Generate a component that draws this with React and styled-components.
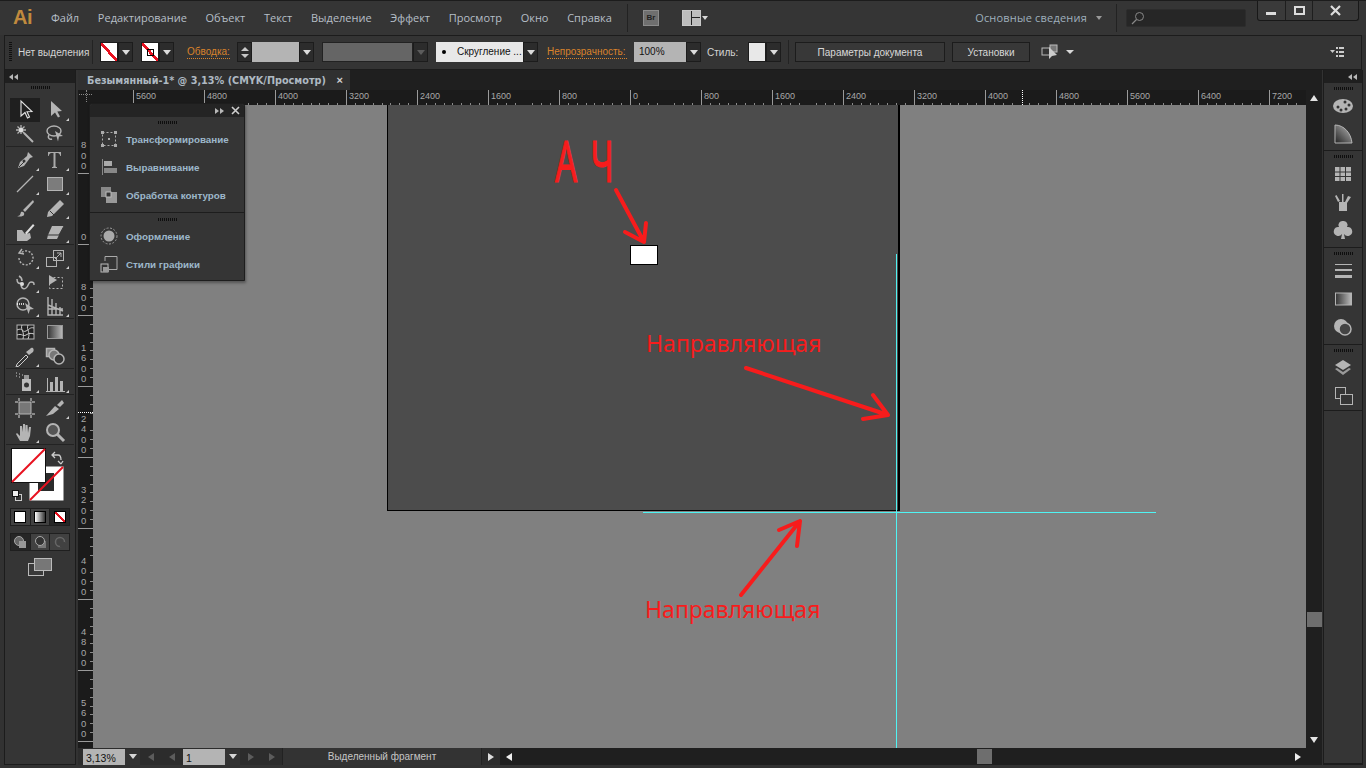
import React from 'react';
import styled, { createGlobalStyle } from 'styled-components';

const Global = createGlobalStyle`
  html, body { margin: 0; padding: 0; background: #333; }
  * { box-sizing: border-box; }
`;

const UI = '"Open Sans", "Liberation Sans", sans-serif';
const TAHOMA = '"DejaVu Sans", "Liberation Sans", sans-serif';
const ARIAL = '"Liberation Sans", Arial, sans-serif';

const Window = styled.div`
  width: 1366px;
  height: 768px;
  display: flex;
  flex-direction: column;
  background: #323232;
  overflow: hidden;
  border-top: 1px solid #1c1c1c;
`;

/* верхнее меню */
const MenuBar = styled.div`
  height: 34px;
  flex: none;
  display: flex;
  align-items: center;
  padding: 0 0 1px 13px;
  background: #353535;
  position: relative;
`;
const Logo = styled.div`
  width: 38px;
  font: bold 20px ${ARIAL};
  color: #c08a3e;
  letter-spacing: -0.5px;
`;
const Menu = styled.div`
  display: flex;
  gap: 18.7px;
  font: 11px ${UI};
  color: #b6bfc7;
`;
const MenuSep = styled.div`
  width: 1px;
  height: 28px;
  background: #222;
  margin: ${p => p.$m || '0'};
`;
const BridgeBtn = styled.div`
  width: 16px;
  height: 16px;
  background: #6f6f6f;
  border: 1px solid #8b8b8b;
  font: bold 8px ${ARIAL};
  color: #222;
  display: flex;
  align-items: center;
  justify-content: center;
  margin: 0 23px 0 15px;
`;
const ArrangeBtn = styled.div`
  width: 19px;
  height: 16px;
  border: 1px solid #c8c8c8;
  display: grid;
  grid-template-columns: 1fr 1fr;
  grid-template-rows: 1fr 1fr;
  gap: 1px;
  background: #222;
  & > i { background: #bdbdbd; }
  & > i:first-child { grid-row: span 2; }
`;
const TinyDown = styled.div`
  width: 0;
  height: 0;
  border-left: ${p => p.$s || 3}px solid transparent;
  border-right: ${p => p.$s || 3}px solid transparent;
  border-top: ${p => p.$s || 4}px solid ${p => p.$c || '#d8d8d8'};
  margin: ${p => p.$m || '0'};
`;
const Workspace = styled.div`
  font: 11px ${UI};
  letter-spacing: 0.2px;
  color: #9fb0bd;
  margin-left: auto;
`;
const SearchBox = styled.div`
  width: 120px;
  height: 18px;
  background: #262626;
  border: 1px solid #2c2c2c;
  border-radius: 2px;
  margin: 0 120px 0 9px;
  padding-left: 4px;
  display: flex;
  align-items: center;
`;
const WinButtons = styled.div`
  position: absolute;
  top: 0;
  right: 7px;
  width: 102px;
  height: 20px;
  display: flex;
  border: 1px solid #181818;
  border-top: none;
  border-radius: 0 0 3px 3px;
  background: #3a3a3a;
`;
const WinBtn = styled.div`
  flex: ${p => p.$w ? 'none' : 1};
  width: ${p => p.$w || 0}px;
  display: flex;
  align-items: center;
  justify-content: center;
  border-right: ${p => p.$last ? 'none' : '1px solid #1e1e1e'};
`;

/* панель управления */
const ControlBar = styled.div`
  height: 35px;
  flex: none;
  margin: 0 4px;
  display: flex;
  align-items: center;
  background: #343434;
  border: 1px solid #1c1c1c;
  padding: 0 0 1px 4px;
  font: 10px ${ARIAL};
  color: #d4d4d4;
  white-space: nowrap;
`;
const Grip = styled.div`
  width: 3px;
  height: 20px;
  flex: none;
  background: repeating-linear-gradient(180deg, #111 0 1px, transparent 1px 2px);
  margin-right: 6px;
`;
const CtlSep = styled.div`
  width: 1px;
  height: 24px;
  flex: none;
  background: #232323;
  margin: ${p => p.$m || '0 7px 0 3px'};
`;
const NoSel = styled.span`
  width: 71px;
  flex: none;
`;
const Combo = styled.div`
  display: flex;
  height: 20px;
  flex: none;
  margin-left: ${p => p.$ml || 0}px;
`;
const DropBtn = styled.div`
  width: 15px;
  height: 20px;
  background: #2c2c2c;
  border: 1px solid #1c1c1c;
  display: flex;
  align-items: center;
  justify-content: center;
  &::before {
    content: '';
    border-left: 4px solid transparent;
    border-right: 4px solid transparent;
    border-top: 5px solid ${p => p.$off ? '#5c5c5c' : '#dcdcdc'};
  }
`;
const Swatch = styled.div`
  width: 18px;
  height: 20px;
  border: 1px solid #1c1c1c;
  background: ${p => p.$plain ? '#e8e8e8' : 'linear-gradient(to top right, #fff 0 44%, #e8111f 44% 56%, #fff 56%)'};
  position: relative;
`;
const StrokeMark = styled.span`
  position: absolute;
  left: 5px;
  top: 6px;
  width: 7px;
  height: 7px;
  border: 1px solid #000;
`;
const OrangeLabel = styled.span`
  width: ${p => p.$w}px;
  color: #d9822b;
  border-bottom: 1px dotted #d9822b;
  line-height: 12px;
  margin-left: ${p => p.$ml || 0}px;
  flex: none;
`;
const Spinner = styled.div`
  width: 15px;
  height: 20px;
  background: #2c2c2c;
  border: 1px solid #1c1c1c;
  display: flex;
  flex-direction: column;
  align-items: center;
  justify-content: center;
  gap: 3px;
`;
const UpTri = styled.div`
  border-left: 4px solid transparent;
  border-right: 4px solid transparent;
  border-bottom: ${p => p.$big ? 6 : 4}px solid ${p => p.$big ? '#e4e4e4' : '#c8c8c8'};
`;
const DownTri = styled.div`
  border-left: 4px solid transparent;
  border-right: 4px solid transparent;
  border-top: ${p => p.$big ? 6 : 4}px solid ${p => p.$big ? '#e4e4e4' : '#c8c8c8'};
`;
const Field = styled.div`
  width: ${p => p.$w}px;
  height: 20px;
  background: ${p => p.$bg || '#b4b4b4'};
  color: #111;
  border: 1px solid ${p => p.$line || 'transparent'};
  padding-left: 4px;
  font: 10px/18px ${ARIAL};
  overflow: hidden;
  white-space: nowrap;
  display: flex;
  align-items: center;
`;
const CornerDot = styled.i`
  width: 4px;
  height: 4px;
  flex: none;
  border-radius: 50%;
  background: #000;
  margin: 0 11px 0 1px;
`;
const CtlText = styled.span`
  width: ${p => p.$w}px;
  margin-left: ${p => p.$ml || 0}px;
  flex: none;
`;
const CtlButton = styled.div`
  width: ${p => p.$w}px;
  height: 20px;
  flex: none;
  margin-left: ${p => p.$ml || 0}px;
  background: #383838;
  border: 1px solid #1c1c1c;
  display: flex;
  align-items: center;
  justify-content: center;
  color: #d8d8d8;
`;
const LinkIcon = styled.svg`
  display: block;
  flex: none;
  margin-left: 11px;
`;
const PanelMenuIcon = styled.svg`
  display: block;
  flex: none;
  margin: 0 16px 0 auto;
`;

/* рабочая область */
const Body = styled.div`
  flex: 1;
  min-height: 0;
  display: flex;
  padding: 0 3px 3px 4px;
`;
const ToolPanel = styled.div`
  width: 72px;
  flex: none;
  background: #353535;
  border: 1px solid #1c1c1c;
  border-top: none;
  display: flex;
  flex-direction: column;
`;
const PanelHead = styled.div`
  height: 13px;
  flex: none;
  background: #1f1f1f;
  display: flex;
  align-items: center;
  justify-content: ${p => p.$end ? 'flex-end' : 'flex-start'};
  padding: 0 4px;
`;
const DoubleArrow = styled.div`
  display: flex;
  transform: ${p => p.$right ? 'scaleX(-1)' : 'none'};
  &::before, &::after {
    content: '';
    border-top: 3px solid transparent;
    border-bottom: 3px solid transparent;
    border-right: 4px solid #b8b8b8;
    margin-right: 1px;
  }
`;
const GripH = styled.div`
  width: ${p => p.$w || 19}px;
  height: 3px;
  flex: none;
  margin: ${p => p.$m || '0 auto'};
  background: repeating-linear-gradient(90deg, #0e0e0e 0 1px, transparent 1px 2px);
`;
const ToolGroup = styled.div`
  display: grid;
  grid-template-columns: 30px 30px;
  grid-auto-rows: 24px;
  padding-left: 4px;
  margin: 0 1px 1px 1px;
  border-bottom: 1px solid #232323;
`;
const Tool = styled.div`
  position: relative;
  display: flex;
  align-items: center;
  justify-content: center;
  background: ${p => p.$on ? '#1f1f1f' : 'transparent'};
  &::after {
    content: '';
    display: ${p => p.$more ? 'block' : 'none'};
    position: absolute;
    right: 1px;
    bottom: 1px;
    border-left: 3px solid transparent;
    border-bottom: 3px solid #cfcfcf;
  }
`;
const Ico = styled.svg`
  display: block;
  flex: none;
`;
const ColorWidget = styled.div`
  height: 62px;
  flex: none;
`;
const ModeRow = styled.div`
  display: flex;
  height: 18px;
  width: 60px;
  margin: 0 0 7px 5px;
  flex: none;
  background: #1f1f1f;
  padding: 1px;
  gap: 1px;
`;
const ModeBtn = styled.div`
  flex: 1;
  display: flex;
  align-items: center;
  justify-content: center;
  background: ${p => p.$dark ? '#262626' : '#414141'};
`;
const ModeFill = styled.div`
  width: 12px;
  height: 12px;
  border: 1px solid #000;
  background: ${p => p.$bg};
`;
const ScreenMode = styled.div`
  display: flex;
  justify-content: center;
`;

const Doc = styled.div`
  flex: 1;
  min-width: 0;
  margin: 0 1px 0 2px;
  display: flex;
  flex-direction: column;
  position: relative;
`;
const TabRow = styled.div`
  height: 20px;
  flex: none;
  background: #1f1f1f;
  display: flex;
`;
const Tab = styled.div`
  width: 272px;
  background: #303030;
  display: flex;
  align-items: center;
  justify-content: space-between;
  padding: 0 7px 0 9px;
  font: bold 9.7px ${TAHOMA};
  color: #aeb9c2;
  white-space: nowrap;
`;
const CloseMark = styled.span`
  font: bold 11px ${ARIAL};
  color: #cfcfcf;
`;
const DocBody = styled.div`
  flex: 1;
  min-height: 0;
  display: flex;
`;
const CanvasCol = styled.div`
  flex: 1;
  min-width: 0;
  display: flex;
  flex-direction: column;
`;
const TopRulerRow = styled.div`
  height: 15px;
  flex: none;
  display: flex;
  background: #1b1b1b;
`;
const RulerCorner = styled.div`
  width: 15px;
  flex: none;
  position: relative;
  &::before {
    content: '';
    position: absolute;
    left: 1px;
    right: 1px;
    top: 4px;
    border-top: 1px dotted #888;
  }
  &::after {
    content: '';
    position: absolute;
    top: 0;
    bottom: 3px;
    left: 8px;
    border-left: 1px dotted #888;
  }
`;
const TopRuler = styled.div`
  flex: 1;
  display: flex;
  overflow: hidden;
  position: relative;
`;
const HCell = styled.div`
  width: 71px;
  flex: none;
  margin-left: ${p => p.$ml || 0}px;
  height: 15px;
  padding-left: 2px;
  border-left: 1px solid #9a9a9a;
  font: 9px/13px ${ARIAL};
  color: #a8a8a8;
  background: repeating-linear-gradient(90deg, transparent 0 7.875px, #8c8c8c 7.875px 8.875px) left bottom / 100% 2px no-repeat;
`;
const MouseMarkH = styled.div`
  position: absolute;
  top: 0;
  bottom: 0;
  left: 929px;
  border-left: 1px dotted #fff;
`;
const CanvasRow = styled.div`
  flex: 1;
  min-height: 0;
  display: flex;
`;
const LeftRuler = styled.div`
  width: 15px;
  flex: none;
  background: #1b1b1b;
  overflow: hidden;
  position: relative;
`;
const VCell = styled.div`
  height: 71px;
  margin-top: ${p => p.$mt || 0}px;
  border-bottom: 1px solid #9a9a9a;
  display: flex;
  align-items: flex-end;
  padding: 0 0 2px 3px;
  background: repeating-linear-gradient(180deg, transparent 0 7.875px, #8c8c8c 7.875px 8.875px) right top / 3px 100% no-repeat;
`;
const VLabel = styled.span`
  width: 7px;
  font: 9.5px/10.2px ${ARIAL};
  color: #a8a8a8;
  word-break: break-all;
`;
const MouseMarkV = styled.div`
  position: absolute;
  left: 0;
  right: 0;
  top: 307px;
  border-top: 1px dotted #fff;
`;
const Canvas = styled.div`
  flex: 1;
  position: relative;
  overflow: hidden;
  background: #808080;
`;
const Artboard = styled.div`
  position: absolute;
  left: 294px;
  top: -20px;
  width: 513px;
  height: 426px;
  background: #4c4c4c;
  border: 1px solid #000;
  border-right-width: 2px;
`;
const SmallRect = styled.div`
  position: absolute;
  left: 537px;
  top: 140px;
  width: 28px;
  height: 20px;
  background: #fff;
  border: 1px solid #000;
`;
const GuideV = styled.div`
  position: absolute;
  left: 803px;
  top: 149px;
  bottom: 0;
  width: 1px;
  background: #4ff4f4;
`;
const GuideH = styled.div`
  position: absolute;
  left: 550px;
  top: 407px;
  width: 513px;
  height: 1px;
  background: #4ff4f4;
`;
const Note = styled.span`
  position: absolute;
  left: ${p => p.$x}px;
  top: ${p => p.$y}px;
  font: 23px/30px "Noto Sans", "Open Sans", sans-serif;
  color: #f71c1c;
  white-space: nowrap;
`;
const A4Note = styled.span`
  position: absolute;
  left: 462px;
  top: 25px;
  font: 56px/60px "Noto Sans", "Open Sans", sans-serif;
  letter-spacing: 3.5px;
  -webkit-text-stroke: 1px #f71c1c;
  color: #f71c1c;
  white-space: pre;
  transform-origin: left top;
  transform: scaleX(0.62);
`;
const ArrowLayer = styled.svg`
  position: absolute;
  left: 0;
  top: 0;
`;

const VScroll = styled.div`
  width: 16px;
  flex: none;
  background: #1f1f1f;
  display: flex;
  flex-direction: column;
  align-items: center;
  padding: 5px 0;
`;
const ScrollThumb = styled.div`
  width: 15px;
  height: 15px;
  background: #6e6e6e;
  margin-top: ${p => p.$mt}px;
`;
const Grow = styled.div`
  flex: 1;
`;
const StatusBar = styled.div`
  height: 17px;
  flex: none;
  background: #2c2c2c;
  display: flex;
  align-items: center;
  padding-left: 5px;
`;
const StatusField = styled.div`
  width: 42px;
  height: 16px;
  background: #b4b4b4;
  color: #111;
  font: 10.5px/18px ${ARIAL};
  padding-left: 3px;
`;
const StatusDrop = styled.div`
  width: 15px;
  height: 16px;
  background: #333;
  display: flex;
  align-items: center;
  justify-content: center;
  &::before {
    content: '';
    border-left: 4px solid transparent;
    border-right: 4px solid transparent;
    border-top: 5px solid #d8d8d8;
  }
`;
const NavGroup = styled.div`
  width: ${p => p.$w}px;
  height: 16px;
  display: flex;
  align-items: center;
  justify-content: center;
  gap: 15px;
`;
const NavL = styled.div`
  border-top: 4px solid transparent;
  border-bottom: 4px solid transparent;
  border-right: 6px solid ${p => p.$c || '#5c5c5c'};
`;
const NavR = styled.div`
  border-top: 4px solid transparent;
  border-bottom: 4px solid transparent;
  border-left: 6px solid ${p => p.$c || '#5c5c5c'};
  margin-left: ${p => p.$ml || 0}px;
`;
const StatusText = styled.div`
  width: 200px;
  height: 17px;
  flex: none;
  background: #333;
  border-left: 1px solid #222;
  border-right: 1px solid #222;
  text-align: center;
  font: 10px/17px ${ARIAL};
  color: #c6c6c6;
`;
const HScroll = styled.div`
  flex: 1;
  height: 17px;
  background: #1f1f1f;
  display: flex;
  align-items: center;
  padding: 0 21px 0 6px;
  margin-left: 6px;
`;
const HThumb = styled.div`
  width: 15px;
  height: 15px;
  background: #6e6e6e;
  margin-left: 465px;
`;

const RightDock = styled.div`
  width: 40px;
  flex: none;
  display: flex;
  flex-direction: column;
  background: #353535;
  border: 1px solid #1c1c1c;
  border-top: none;
`;
const DockGroup = styled.div`
  height: ${p => p.$h}px;
  flex: ${p => p.$fill ? 1 : 'none'};
  border-bottom: 1px solid #1c1c1c;
  padding-top: 3px;
  display: flex;
  flex-direction: column;
  align-items: center;
`;
const DockIcon = styled.div`
  height: 28px;
  flex: none;
  display: flex;
  align-items: center;
  justify-content: center;
`;

/* плавающая панель */
const FloatPanel = styled.div`
  position: absolute;
  left: 11px;
  top: 33px;
  width: 156px;
  height: 178px;
  background: #353535;
  border: 1px solid #1d1d1d;
  border-radius: 3px 3px 0 0;
  box-shadow: 1px 2px 3px rgba(0, 0, 0, 0.35);
  display: flex;
  flex-direction: column;
`;
const FloatHead = styled.div`
  height: 13px;
  flex: none;
  background: #242424;
  border-radius: 3px 3px 0 0;
  display: flex;
  align-items: center;
  justify-content: flex-end;
  gap: 7px;
  padding-right: 4px;
`;
const FloatGroup = styled.div`
  height: ${p => p.$h}px;
  flex: none;
  padding-top: ${p => p.$pt}px;
  border-bottom: ${p => p.$last ? 'none' : '1px solid #1d1d1d'};
`;
const FloatRow = styled.div`
  height: 28px;
  display: flex;
  align-items: center;
  padding-left: 10px;
  gap: 8px;
  font: bold 9.8px ${ARIAL};
  color: #9db8cb;
  white-space: nowrap;
`;

const G = '#b4b4b4';

const I = ({ s = 22, children }) => (
  <Ico width={s} height={s} viewBox="0 0 22 22">{children}</Ico>
);

const toolIcons = {
  select: <path d="M7 2v15l4-3.500 2.500 5.500 2-1-2.500-5.200 5-.3z" fill="#1f1f1f" stroke="#e4e4e4" strokeWidth="1.100" />,
  direct: <path d="M7 2v15l4-3.500 3 5 2-1-2.700-5 4.700-.5z" fill={G} />,
  wand: <g stroke={G}><path d="M10 10l9 9" strokeWidth="2" /><path d="M7 2v9M2 7h10M3.500 3.500l7 7M10.500 3.500l-7 7" strokeWidth="1.300" /><circle cx="7" cy="7" r="2.200" fill="#ddd" stroke="none" /></g>,
  lasso: <g fill="none" stroke={G} strokeWidth="1.400"><ellipse cx="10" cy="8" rx="7" ry="5" /><path d="M5 12c-2 3 1 5 3 4" /><path d="M11 8l8 5-4 .5-1 5z" fill={G} stroke="none" /></g>,
  pen: <g><path d="M14 3l5 5-3 1-6 8-6 2 2-6 7-6z" fill={G} /><circle cx="10" cy="12" r="1.500" fill="#333" /><path d="M5 18l5-5" stroke="#333" /></g>,
  type: <path d="M5 3h12v4h-.7c-.3-1.500-1-3-2.800-3h-2v13c0 .8.5 1 1.500 1v1H8v-1c1 0 1.500-.2 1.500-1V4h-2C5.700 4 5 5.500 4.700 7H4V3z" fill="#aaa" />,
  line: <path d="M3 19L19 3" stroke={G} strokeWidth="1.200" />,
  rect: <rect x="3.500" y="4.500" width="15" height="13" fill="#7c7c7c" stroke={G} />,
  brush: <g fill={G}><path d="M19 3L9 13l2 2L20 5z" /><path d="M3 19c3 0 3-1 4-4 2-1 4 1 3 3-1 1.500-4 2-7 1z" /></g>,
  pencil: <g><path d="M16 3l4 4L8 19l-5 1 1-5z" fill={G} /><path d="M6 14l4 4" stroke="#333" /></g>,
  blob: <g fill={G}><path d="M3 9h5l3 4 5-1 1 5-4 3H3z" /><path d="M11 12l8-9 1.500 1.500-8 9z" fill="#ddd" /></g>,
  eraser: <g><path d="M8 5h12l-5 9-2 4H3l1-4z" fill={G} /><path d="M4 14h11l5-9" fill="none" stroke="#353535" /></g>,
  rotate: <g fill="none" stroke={G} strokeWidth="1.400"><path d="M5 11a7 7 0 1 0 2-5" strokeDasharray="2 1.500" /><path d="M8 2L5 6l5 1" /></g>,
  scale: <g fill="none" stroke={G}><rect x="9.500" y="3.500" width="10" height="10" /><rect x="2.500" y="10.500" width="10" height="9" /><path d="M11 12l6-6M13 6h4v4" /></g>,
  warp: <g fill="none" stroke={G} strokeWidth="1.500"><path d="M3 8c0 4 2 5 4 4M8 13c-2 3 1 6 4 4s2-6 5-6 3 1 3 3" /><path d="M5 5c2 1 3 3 3 5" /><circle cx="8" cy="13" r="2" fill="#ddd" stroke="none" /></g>,
  free: <g><path d="M5 4v10l8-5z" fill={G} /><rect x="5.500" y="6.500" width="13" height="11" fill="none" stroke={G} strokeDasharray="2 2" /></g>,
  shape: <g><circle cx="9" cy="9" r="6" fill="none" stroke={G} strokeWidth="1.500" /><path d="M3 9h8" stroke="#fff" strokeDasharray="1 1" strokeWidth="1.500" /><path d="M11 8l9 6-4 .5-1.500 4.500z" fill={G} /></g>,
  graphGrid: <g fill="none" stroke={G} strokeWidth="1.400"><path d="M4 2v18h15M8 4v16M12 8v12M16 12v8M4 10l15 6M4 14h15" /></g>,
  mesh: <g><rect x="3" y="4" width="17" height="14" fill="#222" stroke={G} /><path d="M3 9c6-3 5 3 9 1s4-4 8-3M3 14c5-2 6 2 9 0s5-2 8-1M8 4c-2 5 3 6 1 14M14 4c-2 5 3 7 0 14" fill="none" stroke="#ccc" /></g>,
  gradient: <g><defs><linearGradient id="tg"><stop offset="0" stopColor="#333" /><stop offset="1" stopColor="#bbb" /></linearGradient></defs><rect x="3.500" y="4.500" width="15" height="13" fill="url(#tg)" stroke="#999" /></g>,
  drop: <g><path d="M3 19l9-9 2 2-9 9-3 1z" fill="#333" stroke="#ccc" /><path d="M12 7l3 3 4-3c2-3-1-6-3-3z" fill={G} /></g>,
  blend: <g fill="none" stroke={G} strokeWidth="1.500"><rect x="2.500" y="3.500" width="8" height="8" fill="#888" /><circle cx="10" cy="10" r="5" fill="#777" /><circle cx="15" cy="14" r="5" fill="#333" /></g>,
  spray: <g><path d="M8 8h9v12H8z" fill="#bbb" /><path d="M10 4h5v4h-5z" fill="#999" /><circle cx="12.500" cy="14" r="2.500" fill="#333" /><path d="M2 2h1M5 3h1M2 5h1M5 6h1M8 4h1" stroke="#ccc" /></g>,
  chart: <g fill={G}><path d="M2 20h19v1H2zM3 7h1v13H3z" /><rect x="6" y="11" width="3" height="9" /><rect x="11" y="6" width="3" height="14" /><rect x="16" y="10" width="3" height="10" /></g>,
  artboard: <g><rect x="5" y="5" width="12" height="12" fill="#777" stroke={G} /><path d="M5 1v3M17 1v3M5 18v3M17 18v3M1 5h3M1 17h3M18 5h3M18 17h3" stroke="#ddd" /></g>,
  slice: <g fill={G}><path d="M2 19l9-10 4 3-6 5z" /><path d="M13 8l5-5 2 3-4 4z" /></g>,
  hand: <path d="M6 20l-4-7 1-1 3 3V5l2 0 1 6V3h2l.5 8V4h2l.5 8 1-6h2l-1 9-2 5z" fill={G} />,
  zoom: <g><circle cx="9" cy="9" r="6" fill="#555" stroke={G} strokeWidth="2" /><path d="M13 13l7 7" stroke={G} strokeWidth="3" /></g>,
};

const toolGroups = [
  [['select', 0, true], ['direct', 1], ['wand'], ['lasso']],
  [['pen', 1], ['type', 1], ['line', 1], ['rect', 1], ['brush', 0], ['pencil', 1], ['blob'], ['eraser', 1]],
  [['rotate', 1], ['scale', 1], ['warp', 1], ['free'], ['shape', 1], ['graphGrid', 1]],
  [['mesh'], ['gradient'], ['drop', 1], ['blend']],
  [['spray', 1], ['chart', 1]],
  [['artboard'], ['slice', 1], ['hand', 1], ['zoom']],
];

const hLabels = ['', '5600', '4800', '4000', '3200', '2400', '1600', '800', '0', '800', '1600', '2400', '3200', '4000', '4800', '5600', '6400', '7200'];
const vLabels = ['800', '0', '800', '1600', '2400', '3200', '4000', '4800', '5600'];

const Xmark = () => (
  <Ico width="9" height="9" viewBox="0 0 9 9"><path d="M1 1l7 7M8 1L1 8" stroke="#cfcfcf" strokeWidth="1.600" /></Ico>
);

const dockIcons = [
  {
    h: 68, items: [
      <g key="a"><ellipse cx="11" cy="11" rx="10" ry="7" fill={G} /><g fill="#333"><circle cx="6" cy="12" r="1.500" /><circle cx="9" cy="15" r="1.500" /><circle cx="14" cy="14" r="1.500" /><circle cx="17" cy="10" r="1.500" /><circle cx="13" cy="7" r="1.500" /></g></g>,
      <g key="b"><defs><linearGradient id="dk" x1="0" y1="1" x2="1" y2="0"><stop offset="0" stopColor="#222" /><stop offset="1" stopColor="#bbb" /></linearGradient></defs><path d="M3 2c9 0 16 8 17 18H3z" fill="url(#dk)" stroke={G} /></g>,
    ],
  },
  {
    h: 97, items: [
      <g key="a" fill={G}><rect x="3" y="4" width="16" height="14" /><path d="M8 4v14M13.500 4v14M3 9h16M3 13.500h16" stroke="#333" /></g>,
      <g key="b" fill={G}><rect x="7" y="11" width="8" height="9" /><path d="M10 11V3l1.500 0V11zM6 11L3 5l1.500-1L8 10zM13 11l3-6 3 1-4 6z" /></g>,
      <path key="c" d="M11 2a4 4 0 0 1 4 6 4.500 4.500 0 1 1-3 7l1 5H9l1-5a4.500 4.500 0 1 1-3-7 4 4 0 0 1 4-6z" fill={G} />,
    ],
  },
  {
    h: 97, items: [
      <g key="a" fill={G}><rect x="3" y="4" width="17" height="1" /><rect x="3" y="9" width="17" height="2" /><rect x="3" y="15" width="17" height="3" /></g>,
      <g key="b"><defs><linearGradient id="dg"><stop offset="0" stopColor="#333" /><stop offset="1" stopColor="#bbb" /></linearGradient></defs><rect x="3.500" y="5" width="16" height="12" fill="url(#dg)" stroke={G} /></g>,
      <g key="c"><circle cx="9" cy="10" r="7" fill={G} /><circle cx="13" cy="13" r="6" fill="#444" stroke={G} strokeWidth="1.500" /></g>,
    ],
  },
  {
    h: 66, items: [
      <g key="a" fill={G}><path d="M11 3l8 5-8 5-8-5z" /><path d="M3 12l2-1 6 4 6-4 2 1-8 6z" fill="#999" /></g>,
      <g key="b" fill="none" stroke={G}><rect x="3.500" y="2.500" width="10" height="11" /><rect x="8.500" y="9.500" width="12" height="10" fill="#353535" /></g>,
    ],
  },
];

export default function App() {
  return (
    <Window>
      <Global />
      <MenuBar>
        <Logo>Ai</Logo>
        <Menu>
          <span>Файл</span>
          <span>Редактирование</span>
          <span>Объект</span>
          <span>Текст</span>
          <span>Выделение</span>
          <span>Эффект</span>
          <span>Просмотр</span>
          <span>Окно</span>
          <span>Справка</span>
        </Menu>
        <MenuSep $m="0 0 0 15px" />
        <BridgeBtn>Br</BridgeBtn>
        <ArrangeBtn><i /><i /><i /></ArrangeBtn>
        <TinyDown $m="0 0 0 1px" />
        <Workspace>Основные сведения</Workspace>
        <TinyDown $c="#999" $m="0 14px 0 9px" />
        <MenuSep />
        <SearchBox>
          <Ico width="14" height="14" viewBox="0 0 14 14">
            <circle cx="8.500" cy="5.500" r="4" fill="none" stroke="#888" />
            <path d="M5.500 8.500L1 13" stroke="#888" strokeWidth="1.300" />
          </Ico>
        </SearchBox>
        <WinButtons>
          <WinBtn $w={28}>
            <Ico width="11" height="11" viewBox="0 0 11 11"><rect x="0" y="7" width="10" height="3" fill="#ddd" /></Ico>
          </WinBtn>
          <WinBtn $w={27}>
            <Ico width="11" height="11" viewBox="0 0 11 11"><rect x="1" y="2" width="9" height="7" fill="none" stroke="#ddd" strokeWidth="2" /></Ico>
          </WinBtn>
          <WinBtn $last>
            <Ico width="11" height="11" viewBox="0 0 11 11"><path d="M1 1l9 9M10 1l-9 9" stroke="#ddd" strokeWidth="2.200" /></Ico>
          </WinBtn>
        </WinButtons>
      </MenuBar>

      <ControlBar>
        <Grip />
        <NoSel>Нет выделения</NoSel>
        <CtlSep />
        <Combo><Swatch /><DropBtn /></Combo>
        <Combo $ml={8}><Swatch><StrokeMark /></Swatch><DropBtn /></Combo>
        <OrangeLabel $ml={13} $w={43}>Обводка:</OrangeLabel>
        <Combo $ml={7}>
          <Spinner><UpTri /><DownTri /></Spinner>
          <Field $w={47} />
          <DropBtn />
        </Combo>
        <Combo $ml={8}>
          <Field $w={91} $bg="#656565" $line="#222" />
          <DropBtn $off />
        </Combo>
        <Combo $ml={8}>
          <Field $w={87} $bg="#e8e8e8"><CornerDot />Скругление ...</Field>
          <DropBtn />
        </Combo>
        <OrangeLabel $ml={9} $w={80}>Непрозрачность:</OrangeLabel>
        <Combo $ml={7}>
          <Field $w={52}>100%</Field>
          <DropBtn />
        </Combo>
        <CtlText $ml={6} $w={32}>Стиль:</CtlText>
        <Combo $ml={9}><Swatch $plain /><DropBtn /></Combo>
        <CtlSep $m="0 6px 0 7px" />
        <CtlButton $w={150}>Параметры документа</CtlButton>
        <CtlButton $w={78} $ml={7}>Установки</CtlButton>
        <LinkIcon width="18" height="16" viewBox="0 0 18 16">
          <rect x="1" y="4" width="8" height="7" fill="none" stroke="#bbb" />
          <rect x="9" y="1" width="7" height="7" fill="#777" stroke="#bbb" />
          <path d="M8 3v12l3-3 5-1z" fill="#ccc" />
        </LinkIcon>
        <TinyDown $s={4} $m="0 0 0 7px" />
        <PanelMenuIcon width="15" height="10" viewBox="0 0 15 10">
          <path d="M0 3h5L2.500 6z" fill="#ccc" />
          <path d="M6 0h2v2H6zM6 4h2v2H6zM6 8h2v2H6zM9 0h5v2H9zM9 4h5v2H9zM9 8h5v2H9z" fill="#ccc" />
        </PanelMenuIcon>
      </ControlBar>

      <Body>
        <ToolPanel>
          <PanelHead><DoubleArrow /></PanelHead>
          <GripH $m="3px auto 9px" />
          {toolGroups.map((g, i) => (
            <ToolGroup key={i}>
              {g.map(([name, more, on]) => (
                <Tool key={name} $more={!!more} $on={!!on}><I>{toolIcons[name]}</I></Tool>
              ))}
            </ToolGroup>
          ))}
          <ColorWidget>
            <Ico width="60" height="60" viewBox="0 0 60 60">
              <rect x="24.500" y="20.500" width="34" height="34" fill="#fff" />
              <rect x="33" y="27" width="16" height="18" fill="#2b2b2b" />
              <path d="M25 54L58 21" stroke="#e8111f" strokeWidth="2" />
              <rect x="6.500" y="2.500" width="34" height="34" fill="#fff" stroke="#111" />
              <path d="M7 36L40 3" stroke="#e8111f" strokeWidth="2" />
              <path d="M50 6l-3 3 3 3M47 9h6c3 0 3 3 3 5M56 18l-3-3M56 18l2-3" fill="none" stroke="#ccc" strokeWidth="1.300" />
              <rect x="10.500" y="48.500" width="6" height="6" fill="#333" stroke="#ccc" />
              <rect x="7.500" y="44.500" width="6" height="6" fill="#eee" stroke="#111" />
            </Ico>
          </ColorWidget>
          <ModeRow>
            <ModeBtn><ModeFill $bg="#fff" /></ModeBtn>
            <ModeBtn><ModeFill $bg="linear-gradient(90deg,#fff,#333)" /></ModeBtn>
            <ModeBtn $dark><ModeFill $bg="linear-gradient(to top right,#fff 0 42%,#e8111f 42% 58%,#fff 58%)" /></ModeBtn>
          </ModeRow>
          <ModeRow>
            <ModeBtn $dark>
              <Ico width="14" height="14" viewBox="0 0 14 14"><circle cx="6" cy="6" r="4.500" fill="#666" stroke="#aaa" /><rect x="6" y="6" width="7" height="7" fill="#999" /></Ico>
            </ModeBtn>
            <ModeBtn>
              <Ico width="14" height="14" viewBox="0 0 14 14"><rect x="5" y="6" width="8" height="7" fill="#777" /><circle cx="7" cy="6" r="4.500" fill="#333" stroke="#aaa" /></Ico>
            </ModeBtn>
            <ModeBtn>
              <Ico width="14" height="14" viewBox="0 0 14 14"><circle cx="7" cy="7" r="4.500" fill="none" stroke="#666" strokeWidth="1.500" /><rect x="7" y="7" width="5" height="5" fill="#414141" /></Ico>
            </ModeBtn>
          </ModeRow>
          <ScreenMode>
            <Ico width="24" height="18" viewBox="0 0 24 18">
              <rect x="0.500" y="5.500" width="15" height="12" fill="#3a3a3a" stroke="#bbb" />
              <rect x="6.500" y="0.500" width="17" height="12" fill="#777" stroke="#bbb" />
            </Ico>
          </ScreenMode>
        </ToolPanel>

        <Doc>
          <TabRow>
            <Tab>
              <span>Безымянный-1* @ 3,13% (CMYK/Просмотр)</span>
              <CloseMark>×</CloseMark>
            </Tab>
          </TabRow>
          <DocBody>
            <CanvasCol>
              <TopRulerRow>
                <RulerCorner />
                <TopRuler>
                  {hLabels.map((t, i) => (
                    <HCell key={i} $ml={i === 0 ? -31 : 0}>{t}</HCell>
                  ))}
                  <MouseMarkH />
                </TopRuler>
              </TopRulerRow>
              <CanvasRow>
                <LeftRuler>
                  {vLabels.map((t, i) => (
                    <VCell key={i} $mt={i === 0 ? -2 : 0}><VLabel>{t}</VLabel></VCell>
                  ))}
                  <MouseMarkV />
                </LeftRuler>
                <Canvas>
                  <Artboard />
                  <SmallRect />
                  <GuideV />
                  <GuideH />
                  <A4Note>{'А Ч'}</A4Note>
                  <Note $x={553} $y={223}>Направляющая</Note>
                  <Note $x={552} $y={489}>Направляющая</Note>
                  <ArrowLayer width="1213" height="642" viewBox="93 105 1213 642">
                    <g fill="none" stroke="#f71c1c" strokeWidth="4" strokeLinecap="round" strokeLinejoin="round">
                      <path d="M616 190L644 242M625 232L644 242L646 223" />
                      <path d="M746 368L888 415M873 395L888 415L863 419" />
                      <path d="M741 595L800 521M779 530L800 521L797 546" />
                    </g>
                  </ArrowLayer>
                </Canvas>
              </CanvasRow>
            </CanvasCol>
            <VScroll>
              <UpTri $big />
              <ScrollThumb $mt={511} />
              <Grow />
              <DownTri $big />
            </VScroll>
          </DocBody>
          <StatusBar>
            <StatusField>3,13%</StatusField>
            <StatusDrop />
            <NavGroup $w={43}><NavL /><NavL /></NavGroup>
            <StatusField>1</StatusField>
            <StatusDrop />
            <NavGroup $w={42}><NavR /><NavR /></NavGroup>
            <StatusText>Выделенный фрагмент</StatusText>
            <NavR $c="#ddd" $ml={6} />
            <HScroll>
              <NavL $c="#eee" />
              <HThumb />
              <Grow />
              <NavR $c="#eee" />
            </HScroll>
          </StatusBar>
          <FloatPanel>
            <FloatHead>
              <DoubleArrow $right />
              <Xmark />
            </FloatHead>
            <FloatGroup $h={96} $pt={4}>
              <GripH $m="0 auto 1px" />
              <FloatRow>
                <Ico width="18" height="18" viewBox="0 0 18 18">
                  <rect x="2.500" y="2.500" width="13" height="13" fill="none" stroke="#aaa" strokeDasharray="2 2" />
                  <path d="M1 1h3v3H1zM14 1h3v3h-3zM1 14h3v3H1zM14 14h3v3h-3zM8 8h2v2H8z" fill="#aaa" />
                </Ico>
                Трансформирование
              </FloatRow>
              <FloatRow>
                <Ico width="18" height="18" viewBox="0 0 18 18">
                  <path d="M2 1h1v16H2z" fill="#888" />
                  <rect x="4" y="3" width="8" height="5" fill="#aaa" />
                  <rect x="4" y="10" width="13" height="5" fill="#888" />
                </Ico>
                Выравнивание
              </FloatRow>
              <FloatRow>
                <Ico width="18" height="18" viewBox="0 0 18 18">
                  <rect x="1" y="1" width="10" height="10" fill="#888" />
                  <rect x="6" y="6" width="11" height="11" fill="#999" />
                  <rect x="6" y="6" width="5" height="5" fill="#333" stroke="#bbb" />
                </Ico>
                Обработка контуров
              </FloatRow>
            </FloatGroup>
            <FloatGroup $h={66} $pt={5} $last>
              <GripH $m="0 auto 1px" />
              <FloatRow>
                <Ico width="18" height="18" viewBox="0 0 18 18">
                  <circle cx="9" cy="9" r="8" fill="none" stroke="#999" strokeDasharray="2 1.500" />
                  <circle cx="9" cy="9" r="5.500" fill="#aaa" />
                </Ico>
                Оформление
              </FloatRow>
              <FloatRow>
                <Ico width="18" height="18" viewBox="0 0 18 18">
                  <path d="M5 6V1.500h12v13H9" fill="none" stroke="#aaa" />
                  <rect x="1" y="9" width="7" height="8" fill="#333" stroke="#bbb" />
                  <rect x="3" y="12" width="6" height="5" fill="#999" />
                </Ico>
                Стили графики
              </FloatRow>
            </FloatGroup>
          </FloatPanel>
        </Doc>

        <RightDock>
          <PanelHead $end><DoubleArrow /></PanelHead>
          {dockIcons.map((g, i) => (
            <DockGroup key={i} $h={g.h}>
              <GripH $m="1px auto 2px" />
              {g.items.map((icon, j) => (
                <DockIcon key={j}><I>{icon}</I></DockIcon>
              ))}
            </DockGroup>
          ))}
          <DockGroup $fill />
        </RightDock>
      </Body>
    </Window>
  );
}
